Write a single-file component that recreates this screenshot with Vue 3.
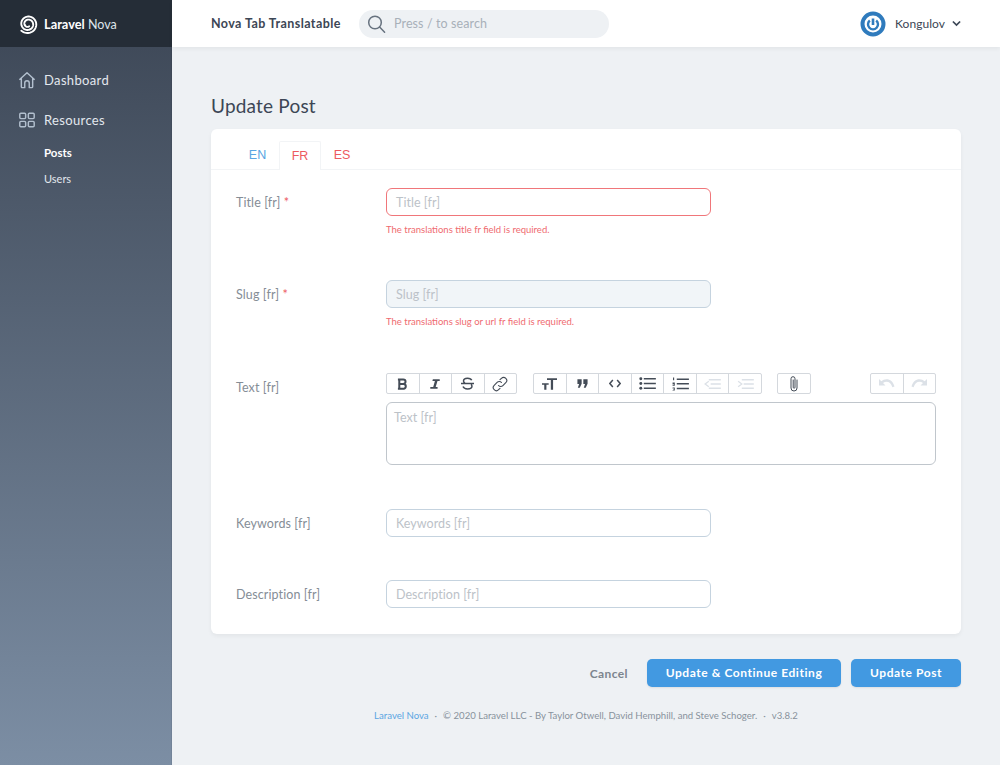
<script setup>
const spiral = (() => {
  const pts = []
  const n = 120
  for (let i = 0; i <= n; i++) {
    const t = i / n
    const r = 2.6 + 6.8 * t
    const a = 1.1 + t * Math.PI * 2 * 2.2
    pts.push((10 + r * Math.cos(a)).toFixed(2) + ' ' + (10 + r * Math.sin(a)).toFixed(2))
  }
  return 'M' + pts.join('L')
})()
</script>

<template>
  <div class="app">
    <aside class="side">
      <div class="brand">
        <svg class="logo" width="20" height="20" viewBox="0 0 20 20" fill="none" stroke="#fff" stroke-width="1.900" stroke-linecap="round">
          <path :d="spiral"/>
        </svg>
        <span class="brand-text"><b>Laravel</b> Nova</span>
      </div>
      <nav class="nav">
        <a class="nav-item">
          <svg width="18" height="18" viewBox="0 0 20 20" fill="none" stroke="#b2bfce" stroke-width="1.600" stroke-linejoin="round"><path d="M1.500 9.800 10 2l8.500 7.800M3.700 8v9.500a1 1 0 0 0 1 1h2.800v-5.200a2.500 2.500 0 0 1 5 0v5.200h2.800a1 1 0 0 0 1-1V8"/></svg>
          <span>Dashboard</span>
        </a>
        <a class="nav-item">
          <svg width="18" height="18" viewBox="0 0 20 20" fill="none" stroke="#b2bfce" stroke-width="1.600"><rect x="2" y="2.500" width="6.500" height="6" rx="1.200"/><rect x="11.500" y="2.500" width="6.500" height="6" rx="1.200"/><rect x="2" y="11.500" width="6.500" height="6" rx="1.200"/><rect x="11.500" y="11.500" width="6.500" height="6" rx="1.200"/></svg>
          <span>Resources</span>
        </a>
        <a class="sub active">Posts</a>
        <a class="sub">Users</a>
      </nav>
    </aside>

    <div class="main">
      <header class="top">
        <span class="crumb">Nova Tab Translatable</span>
        <div class="search">
          <svg width="20" height="20" viewBox="0 0 20 20" fill="none" stroke="#67727f" stroke-width="1.500" stroke-linecap="round"><circle cx="8" cy="8.500" r="6.300"/><path d="m12.600 13 5 5.200"/></svg>
          <span>Press / to search</span>
        </div>
        <div class="user">
          <svg width="26" height="26" viewBox="0 0 26 26" fill="none"><circle cx="13" cy="13" r="10.500" stroke="#2f7bbd" stroke-width="4"/><path d="M9.800 9.500a5 5 0 1 0 6.400 0" stroke="#2f7bbd" stroke-width="2.400"/><path d="M13 7.500v6.500" stroke="#2f7bbd" stroke-width="2.600"/></svg>
          <span class="uname">Kongulov</span>
          <svg width="9" height="7" viewBox="0 0 10 7" fill="none" stroke="#3c4655" stroke-width="1.900"><path d="m1 1.300 4 4 4-4"/></svg>
        </div>
      </header>

      <main class="content">
        <h1>Update Post</h1>
        <section class="card">
          <div class="tabs">
            <span class="tab en">EN</span>
            <span class="tab fr">FR</span>
            <span class="tab es">ES</span>
          </div>

          <div class="row r-title">
            <label>Title [fr] <i>*</i></label>
            <div class="field">
              <div class="input err">Title [fr]</div>
              <p class="msg">The translations title fr field is required.</p>
            </div>
          </div>

          <div class="row r-slug">
            <label>Slug [fr] <i>*</i></label>
            <div class="field">
              <div class="input dis">Slug [fr]</div>
              <p class="msg">The translations slug or url fr field is required.</p>
            </div>
          </div>

          <div class="row r-text">
            <label>Text [fr]</label>
            <div class="field wide">
              <div class="toolbar">
                <div class="tgroup g1">
                  <span class="tbtn"><svg width="11" height="12" viewBox="0 0 12 13" fill="none" stroke="#444c57" stroke-width="2.200"><path d="M2.500 1.500v10M1 1.500h5.800a2.500 2.500 0 0 1 0 5H2.500h5a2.600 2.600 0 0 1 0 5.100H1"/></svg></span>
                  <span class="tbtn"><svg width="12" height="12" viewBox="0 0 14 13" fill="#444c57"><path d="M4.500 1h8v2h-2.600L7.800 10H10v2H1.500v-2h3.400l2-7H4z"/></svg></span>
                  <span class="tbtn"><svg width="15" height="13" viewBox="0 0 16 14" fill="none" stroke="#444c57" stroke-width="1.600"><path d="M12.500 3.500C12 2 10 1.300 8 1.300 5.500 1.300 3.700 2.500 3.700 4.300c0 .9.500 1.700 1.500 2.400M11.800 8c.6.500 1 1.100 1 1.900 0 1.800-2.100 2.900-4.800 2.900-2.300 0-4.200-.9-4.800-2.500M1 7h14"/></svg></span>
                  <span class="tbtn"><svg width="16" height="16" viewBox="0 0 16 16" fill="none" stroke="#444c57" stroke-width="1.100" stroke-linecap="round"><path d="M6.500 9.500a3 3 0 0 0 4.400.1l2.900-2.900a3.100 3.100 0 0 0-4.400-4.400L8 3.700"/><path d="M9.500 6.500a3 3 0 0 0-4.400-.1L2.200 9.300a3.100 3.100 0 0 0 4.400 4.400L8 12.300"/></svg></span>
                </div>
                <div class="tgroup g2">
                  <span class="tbtn"><svg width="15" height="12" viewBox="0 0 18 14" fill="#444c57"><path d="M6 0h12v2.300h-4.700V14h-2.700V2.300H6zM0 6h8v2H5.300v6H2.700V8H0z"/></svg></span>
                  <span class="tbtn"><svg width="11" height="9" viewBox="0 0 13 10" fill="#444c57"><path d="M.5 0h5v5.300L3.300 10H1l1.500-4.500h-2zM7.500 0h5v5.300L10.300 10H8l1.500-4.500h-2z"/></svg></span>
                  <span class="tbtn"><svg width="12" height="9" viewBox="0 0 14 10" fill="none" stroke="#444c57" stroke-width="1.700"><path d="M4.500 1 1 5l3.500 4M9.500 1 13 5 9.500 9"/></svg></span>
                  <span class="tbtn"><svg width="17" height="13" viewBox="0 0 18 14" fill="#444c57"><circle cx="1.800" cy="2" r="1.600"/><circle cx="1.800" cy="7" r="1.600"/><circle cx="1.800" cy="12" r="1.600"/><path d="M5 1.200h13v1.600H5zM5 6.200h13v1.600H5zM5 11.200h13v1.600H5z"/></svg></span>
                  <span class="tbtn"><svg width="17" height="14" viewBox="0 0 18 15" fill="#444c57"><path d="M1 .5h1.200v3H1zM.500 6h2.400v3.400H.500v-.8h1.600v-.5H.5zM.500 11.300h2.400v3.200H.500v-.7h1.600v-.4H1v-.6h1.100v-.4H.5zM5 1.500h13v1.600H5zM5 6.500h13v1.600H5zM5 11.500h13v1.600H5z"/></svg></span>
                  <span class="tbtn off"><svg width="17" height="12" viewBox="0 0 18 13" fill="#dce1e7"><path d="M5 1h13v1.600H5zM7 5.700h11v1.600H7zM5 10.400h13V12H5z"/><path d="M5 3.500 1 6.500l4 3" fill="none" stroke="#dce1e7" stroke-width="1.400"/></svg></span>
                  <span class="tbtn off"><svg width="17" height="12" viewBox="0 0 18 13" fill="#dce1e7"><path d="M5 1h13v1.600H5zM7 5.700h11v1.600H7zM5 10.400h13V12H5z"/><path d="m1 3.500 4 3-4 3" fill="none" stroke="#dce1e7" stroke-width="1.400"/></svg></span>
                </div>
                <div class="tgroup g3">
                  <span class="tbtn"><svg width="12" height="18" viewBox="0 0 12 17" fill="none" stroke="#444c57" stroke-width="1" stroke-linecap="round"><path d="M9 4.500v8a3 3 0 0 1-6 0V3.200a2 2 0 0 1 4 0v8.600a.9.900 0 0 1-1.800 0V4.500"/></svg></span>
                </div>
                <div class="tgroup g4">
                  <span class="tbtn off"><svg width="18" height="11" viewBox="0 0 18 11" fill="#dce1e7"><path d="M1 1v6.500h6.500L5 5c1.200-.8 2.300-1.200 3.500-1.200 2.600 0 4.600 1.700 5.900 5.500l2.100-.8C15 3.700 12.300 1.300 8.500 1.300 6.500 1.300 4.800 2 3.300 3.300z"/></svg></span>
                  <span class="tbtn off"><svg width="18" height="11" viewBox="0 0 18 11" fill="#dce1e7"><path d="M17 1v6.500h-6.500L13 5c-1.200-.8-2.300-1.200-3.500-1.200-2.600 0-4.600 1.700-5.900 5.500l-2.100-.8C3 3.700 5.700 1.300 9.500 1.300c2 0 3.700.7 5.200 2z"/></svg></span>
                </div>
              </div>
              <div class="editor">Text [fr]</div>
            </div>
          </div>

          <div class="row r-key">
            <label>Keywords [fr]</label>
            <div class="field"><div class="input">Keywords [fr]</div></div>
          </div>

          <div class="row r-desc">
            <label>Description [fr]</label>
            <div class="field"><div class="input">Description [fr]</div></div>
          </div>
        </section>

        <div class="actions">
          <a class="cancel">Cancel</a>
          <a class="btn long">Update &amp; Continue Editing</a>
          <a class="btn short">Update Post</a>
        </div>

        <footer class="foot">
          <a>Laravel Nova</a><span class="dot">·</span><span>© 2020 Laravel LLC - By Taylor Otwell, David Hemphill, and Steve Schoger.</span><span class="dot">·</span><span>v3.8.2</span>
        </footer>
      </main>
    </div>
  </div>
</template>

<style>
html, body { margin: 0; background: #eef1f4; }
</style>

<style scoped>
.app { display: flex; width: 1000px; height: 765px; overflow: hidden; font-family: Lato, "Open Sans", sans-serif; color: #3c4655; background: #eef1f4; }
.side { width: 172px; flex: none; background: linear-gradient(180deg, #3c4655 0%, #7c8ea4 100%); border-right: 1px solid rgba(0,0,0,.06); box-sizing: border-box; }
.brand { height: 47px; background: #252d37; display: flex; align-items: center; padding-left: 18px; box-sizing: border-box; gap: 6px; margin-right: -1px; }
.logo { flex: none; }
.brand-text { color: #dfe4ea; font-size: 12.500px; }
.brand-text b { color: #fff; font-weight: 700; font-size: 12.800px; }
.nav { padding-top: 13px; }
.nav-item { display: flex; align-items: center; height: 40px; padding-left: 18px; gap: 8px; color: #e3e8ee; font-size: 13px; letter-spacing: .35px; }
.nav-item svg { flex: none; }
.sub { display: block; height: 26px; line-height: 26px; padding-left: 44px; font-size: 11px; color: #e3e8ee; }
.sub.active { color: #fff; font-weight: 700; font-size: 11.500px; }

.main { flex: 1; min-width: 0; }
.top { height: 47px; background: #fff; box-shadow: 0 2px 4px rgba(0,0,0,.05); display: flex; align-items: center; padding-left: 39px; box-sizing: border-box; position: relative; }
.crumb { font-weight: 700; font-size: 12.500px; letter-spacing: .42px; color: #3c4655; width: 148px; flex: none; }
.search { width: 250px; height: 28px; border-radius: 14px; background: #eef1f4; display: flex; align-items: center; padding-left: 8px; gap: 7px; box-sizing: border-box; font-size: 12.500px; color: #a8b0b9; letter-spacing: .1px; }
.user { margin-left: auto; margin-right: 39px; display: flex; align-items: center; }
.uname { font-size: 12px; color: #3c4655; margin: 0 7px 0 9px; letter-spacing: .05px; }

.content { padding: 0 39px; }
h1 { margin: 0; font-weight: 400; font-size: 19px; line-height: 26px; padding-top: 46px; height: 36px; box-sizing: content-box; letter-spacing: .2px; color: #3c4655; }
.card { background: #fff; border-radius: 6px; box-shadow: 0 2px 4px rgba(0,0,0,.05); height: 505px; }
.tabs { height: 41px; display: flex; padding-left: 25px; padding-top: 12px; box-sizing: border-box; border-bottom: 1px solid #f2f4f6; }
.tab { width: 42px; height: 29px; line-height: 28px; text-align: center; font-size: 12.500px; box-sizing: border-box; font-family: "Liberation Sans", sans-serif; }
.en { color: #5aa5e2; width: 43px; }
.fr { color: #ed5a5f; background: #fff; border: 1px solid #f2f4f6; border-bottom: 0; border-radius: 2px 2px 0 0; height: 29px; }
.es { color: #ed5a5f; }

.row { display: flex; padding-left: 25px; }
label { width: 150px; flex: none; font-size: 12.500px; color: #858d96; letter-spacing: .1px; line-height: 18px; padding-top: 6px; box-sizing: border-box; }
label i { color: #ed5a5f; font-style: normal; }
.field { width: 325px; }
.wide { width: 550px; }
.input { height: 28px; line-height: 27px; box-sizing: border-box; border: 1px solid #c5d3df; border-radius: 6px; padding-left: 9px; font-size: 12.500px; color: #bcc2c8; letter-spacing: .05px; }
.err { border-color: #f0767a; }
.dis { background: #f1f5f8; }
.msg { margin: 7px 0 0; font-size: 9.500px; line-height: 13px; color: #ef6b70; }
.r-title { margin-top: 18px; height: 92px; }
.r-slug { height: 93px; }
.r-text { height: 136px; }
.r-key { height: 71px; }
.toolbar { display: flex; height: 21px; }
.tgroup { display: flex; border: 1px solid #d4d8dd; border-radius: 2px; box-sizing: border-box; background: #fff; }
.g1 { width: 131px; }
.g2 { width: 229px; margin-left: 16px; }
.g3 { width: 34px; margin-left: 15px; }
.g4 { width: 66px; margin-left: auto; }
.tbtn { flex: 1 1 0; display: flex; align-items: center; justify-content: center; border-left: 1px solid #d4d8dd; box-sizing: border-box; }
.tbtn:first-child { border-left: 0; }
.editor { margin-top: 8px; height: 63px; box-sizing: border-box; border: 1px solid #c0c6cc; border-radius: 6px; padding: 7px 7px; font-size: 12.500px; line-height: 16px; color: #bcc2c8; letter-spacing: .05px; }

.actions { display: flex; justify-content: flex-end; align-items: center; margin-top: 25px; height: 28px; }
.cancel { font-weight: 700; color: #7c858e; font-size: 12px; margin-right: 19px; letter-spacing: .4px; }
.btn { height: 28px; line-height: 28px; background: #4299e1; border-radius: 5px; color: #fff; font-weight: 700; font-size: 12px; text-align: center; box-shadow: 0 1px 2px rgba(0,0,0,.08); letter-spacing: .56px; }
.long { width: 194px; margin-right: 10px; }
.short { width: 110px; }
.foot { margin-top: 22px; text-align: center; font-size: 9.600px; line-height: 14px; color: #88929c; }
.foot a { color: #5aa5e2; }
.dot { margin: 0 6px; }
</style>
